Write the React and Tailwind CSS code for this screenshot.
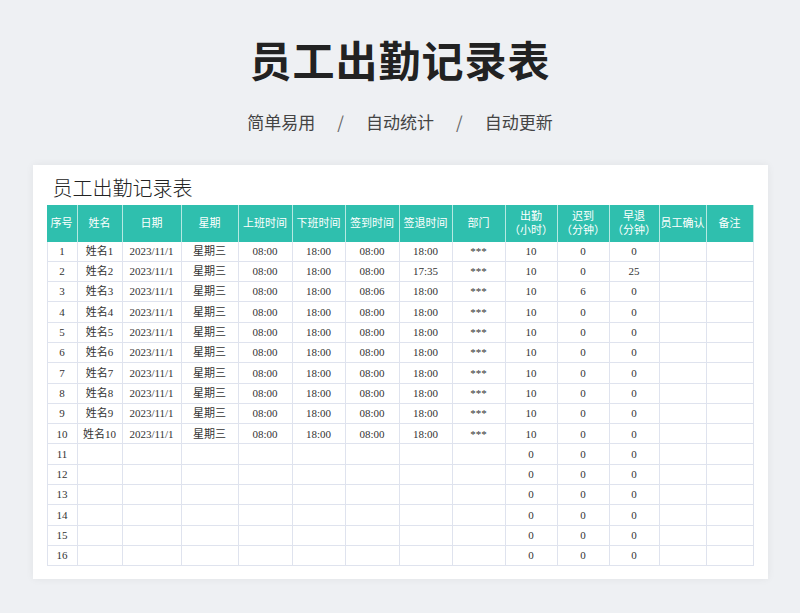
const cols = "grid-cols-[31px_45px_59px_57px_54px_53px_54px_53px_53px_52px_52px_50px_47px_47px]";

const heads = ["序号", "姓名", "日期", "星期", "上班时间", "下班时间", "签到时间", "签退时间", "部门", ["出勤", "（小时）"], ["迟到", "（分钟）"], ["早退", "（分钟）"], "员工确认", "备注"];

const rows = Array.from({ length: 16 }, (_, i) => {
  const n = i + 1;
  if (n > 10) return [n, "", "", "", "", "", "", "", "", "0", "0", "0", "", ""];
  return [
    n, "姓名" + n, "2023/11/1", "星期三", "08:00", "18:00",
    n === 3 ? "08:06" : "08:00", n === 2 ? "17:35" : "18:00", "***", "10",
    n === 3 ? "6" : "0", n === 2 ? "25" : "0", "", "",
  ];
});

export default function App() {
  return (
    <div className="w-[800px] h-[613px] bg-[#eef0f3] flex flex-col items-center" style={{ fontFamily: '"Noto Sans CJK SC", sans-serif' }}>
      <h1 className="mt-[33px] text-[42px] leading-[52px] font-bold text-[#222] tracking-[1px]">员工出勤记录表</h1>
      <div className="mt-[24px] flex items-center gap-[22px] text-[17px] text-[#444]">
        <span>简单易用</span><span className="text-[#666]">/</span>
        <span>自动统计</span><span className="text-[#666]">/</span>
        <span>自动更新</span>
      </div>
      <div className="mt-[30px] w-[735px] h-[414px] bg-white shadow-[0_0_8px_rgba(0,0,0,0.06)] pl-[14px] pt-[8px]" style={{ fontFamily: '"Liberation Serif", "Noto Sans CJK SC", serif' }}>
        <div className="pl-[6px] text-[20px] leading-[30px] text-[#222]" style={{ fontFamily: '"Noto Sans CJK SC", sans-serif', fontWeight: 300 }}>员工出勤记录表</div>
        <div className="w-[707px]">
          <div className={`mt-[2px] grid ${cols} bg-[#2fbfae] text-white text-[11px] h-[37px]`}>
            {heads.map((h, i) => (
              <div key={i} className="border-r border-[#b6e9e2] flex flex-col items-center justify-center leading-[14px] whitespace-nowrap">
                {Array.isArray(h) ? h.map((t) => <span key={t}>{t}</span>) : h}
              </div>
            ))}
          </div>
          {rows.map((r, ri) => (
            <div key={ri} className={`grid ${cols} h-[20.3px] text-[11px] text-[#333] border-b border-[#dfe3ee]`}>
              {r.map((c, ci) => (
                <div key={ci} className={`flex items-center justify-center border-r border-[#dfe3ee] ${ci === 0 ? "border-l" : ""}`}>{c}</div>
              ))}
            </div>
          ))}
        </div>
      </div>
    </div>
  );
}
